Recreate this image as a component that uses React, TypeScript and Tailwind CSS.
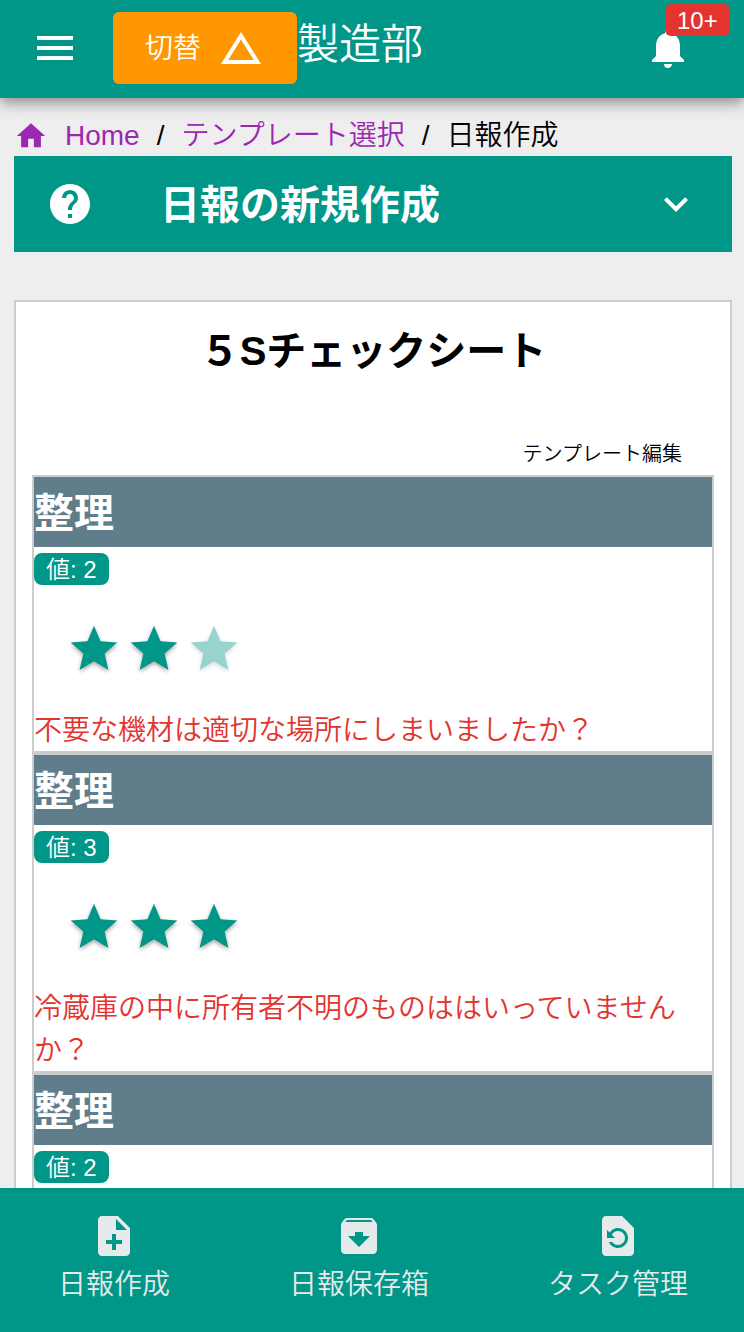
import { useState } from "react";
import {
  MdArchive,
  MdChangeHistory,
  MdGrade,
  MdHelp,
  MdHome,
  MdKeyboardArrowDown,
  MdMenu,
  MdNoteAdd,
  MdNotifications,
  MdRestorePage,
} from "react-icons/md";

type CheckItem = { heading: string; question: string; value: number };

const initialItems: CheckItem[] = [
  { heading: "整理", question: "不要な機材は適切な場所にしまいましたか？", value: 2 },
  { heading: "整理", question: "冷蔵庫の中に所有者不明のものははいっていませんか？", value: 3 },
  { heading: "整理", question: "", value: 2 },
];

const tabs = [
  { label: "日報作成", Icon: MdNoteAdd },
  { label: "日報保存箱", Icon: MdArchive },
  { label: "タスク管理", Icon: MdRestorePage },
];

function Header() {
  return (
    <header className="relative z-10 flex shrink-0 items-center bg-[#009688] pt-3 pr-[52px] pb-3.5 pl-[31px] text-white shadow-[0_4px_8px_-2px_rgba(0,0,0,0.2),0_8px_10px_rgba(0,0,0,0.14),0_6px_20px_rgba(0,0,0,0.12)]">
      <button type="button" aria-label="メニュー" className="mr-[34px]">
        <MdMenu className="size-12" />
      </button>
      <button
        type="button"
        className="flex h-[72px] items-center gap-4 rounded-md bg-[#ff9800] px-8 text-[28px] font-[350]"
      >
        <span className="pt-0.5">切替</span>
        <MdChangeHistory className="size-12" />
      </button>
      <div className="flex-1 pb-1.5 text-[42px] leading-[56px] font-[350]">製造部</div>
      <button type="button" aria-label="通知" className="relative">
        <MdNotifications className="size-12" />
        <span className="absolute -top-5 left-[21px] rounded-md bg-[#e3342f] px-3 pt-0.5 text-2xl leading-[30px]">
          10+
        </span>
      </button>
    </header>
  );
}

function Breadcrumbs() {
  return (
    <nav className="flex items-center gap-[17px] pt-[18px] text-[28px] leading-10 font-[350]">
      <a href="#home" className="flex items-center gap-[17px] text-[#9c27b0]">
        <MdHome className="size-[34px]" />
        Home
      </a>
      <span>/</span>
      <a href="#templates" className="text-[#9c27b0]">
        テンプレート選択
      </a>
      <span>/</span>
      <span>日報作成</span>
    </nav>
  );
}

function Rating({ value, onChange }: { value: number; onChange: (v: number) => void }) {
  return (
    <div className="flex gap-1 pt-9 pb-[33px] pl-8 text-[#009688]">
      {[1, 2, 3].map((n) => (
        <button
          key={n}
          type="button"
          aria-label={`${n}`}
          onClick={() => onChange(n)}
          className={n <= value ? "" : "opacity-40"}
        >
          <MdGrade className="size-14 drop-shadow-[0_2px_2px_rgba(0,0,0,0.35)]" />
        </button>
      ))}
    </div>
  );
}

export default function App() {
  const [items, setItems] = useState(initialItems);
  const setValue = (index: number, value: number) =>
    setItems(items.map((item, i) => (i === index ? { ...item, value } : item)));

  return (
    <div className="flex h-screen flex-col bg-[#eeeeee] font-['Liberation_Sans','Noto_Sans_CJK_JP',sans-serif] text-black">
      <Header />
      <main className="min-h-0 flex-1 overflow-y-auto pr-3 pl-3.5 [scrollbar-width:none]">
        <Breadcrumbs />
        <button
          type="button"
          className="flex h-24 w-full items-center bg-[#009688] px-8 text-left text-white"
        >
          <MdHelp className="mr-[66px] size-12" />
          <span className="flex-1 pt-0.5 text-[40px] font-bold">日報の新規作成</span>
          <MdKeyboardArrowDown className="size-12" />
        </button>

        <section className="mt-12 border-2 border-[#cccccc] bg-white px-4">
          <h1 className="pt-[18px] text-center text-[40px] leading-[62px] font-bold">
            ５Sチェックシート
          </h1>
          <div className="flex justify-end pt-[58px] pr-8 pb-1.5">
            <a href="#edit" className="text-xl leading-[29px] font-[350]">
              テンプレート編集
            </a>
          </div>
          {items.map((item, index) => (
            <article key={index} className="border-2 border-[#cccccc]">
              <h2 className="bg-[#607d8b] pt-0.5 text-[40px] leading-[68px] font-bold text-white">
                {item.heading}
              </h2>
              <div className="pt-1.5">
                <span className="block w-fit rounded-lg bg-[#009688] px-3 pt-0.5 text-2xl leading-[30px] font-[350] text-white">
                  値: {item.value}
                </span>
                <Rating value={item.value} onChange={(v) => setValue(index, v)} />
                <p className="-mb-px text-[28px] leading-[42px] font-[350] text-[#e3342f]">
                  {item.question}
                </p>
              </div>
            </article>
          ))}
        </section>
      </main>
      <nav className="flex shrink-0 justify-between bg-[#009688] pr-14 pl-[58px] text-[#e5eaea]">
        {tabs.map(({ label, Icon }) => (
          <button
            key={label}
            type="button"
            className="flex h-36 flex-col items-center pt-6 text-[28px] leading-[50px] font-[350]"
          >
            <Icon className="size-12" />
            {label}
          </button>
        ))}
      </nav>
    </div>
  );
}
